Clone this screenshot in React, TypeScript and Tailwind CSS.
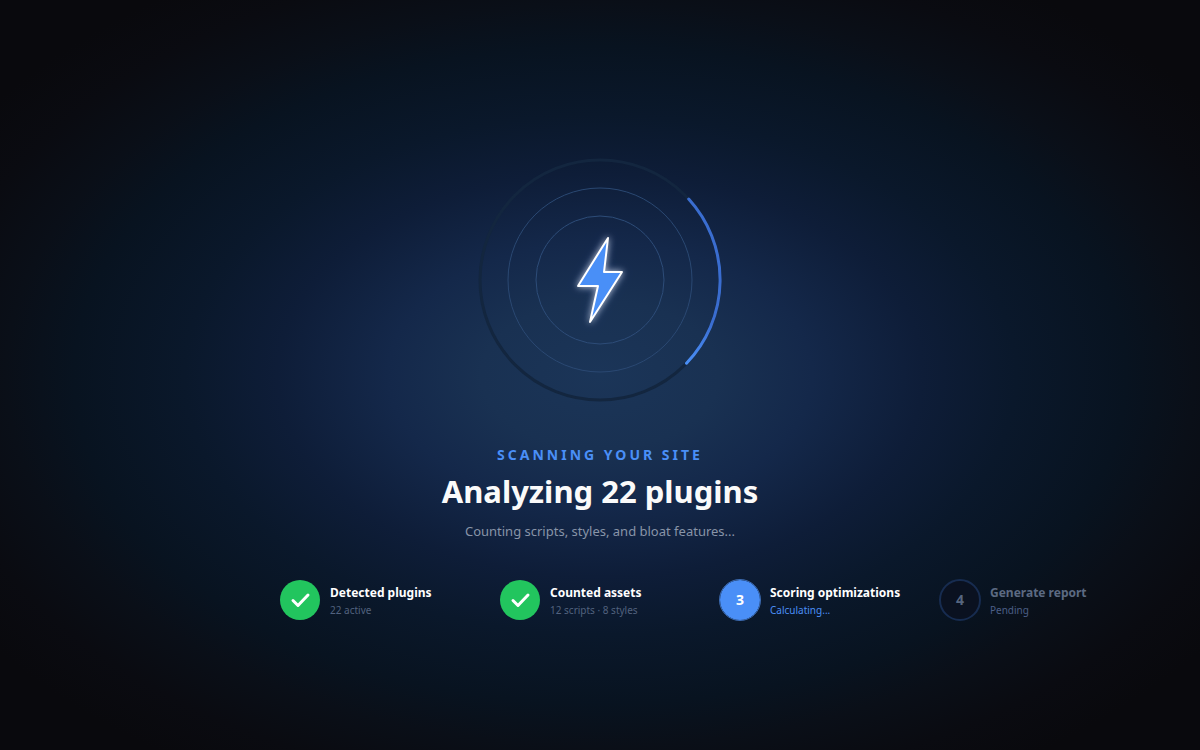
type StepStatus = 'done' | 'active' | 'pending';

interface Step {
  title: string;
  detail: string;
  status: StepStatus;
}

const STEPS: Step[] = [
  { title: 'Detected plugins', detail: '22 active', status: 'done' },
  { title: 'Counted assets', detail: '12 scripts · 8 styles', status: 'done' },
  { title: 'Scoring optimizations', detail: 'Calculating...', status: 'active' },
  { title: 'Generate report', detail: 'Pending', status: 'pending' },
];

const badgeStyles: Record<StepStatus, string> = {
  done: 'bg-[#22c55e] text-white',
  active: 'bg-[#4a8ff7] text-white outline-1 outline-[#3d6db5]',
  pending: 'bg-[#0a1120] text-[#56657f] outline-2 -outline-offset-1 outline-[#172c50]',
};

const titleStyles: Record<StepStatus, string> = {
  done: 'text-white',
  active: 'text-white',
  pending: 'text-[#5c6a82]',
};

const detailStyles: Record<StepStatus, string> = {
  done: 'text-[#52627e]',
  active: 'text-[#4a8ff7]',
  pending: 'text-[#4c5f86]',
};

function ScanRings() {
  return (
    <svg width="280" height="280" viewBox="-140 -140 280 280" fill="none" aria-hidden="true">
      <defs>
        <filter id="bolt-glow" x="-60%" y="-30%" width="220%" height="160%">
          <feDropShadow dx="0" dy="0" stdDeviation="3" floodColor="#ffffff" floodOpacity="0.6" />
          <feDropShadow dx="0" dy="0" stdDeviation="4" floodColor="#4a8ff7" floodOpacity="0.3" />
        </filter>
        <linearGradient id="arc" gradientUnits="userSpaceOnUse" x1="0" y1="-83" x2="0" y2="84">
          <stop offset="0" stopColor="#3a6dd0" />
          <stop offset="0.75" stopColor="#3a6dd0" />
          <stop offset="1" stopColor="#4a8ff7" />
        </linearGradient>
      </defs>
      <circle r="120" stroke="#13263f" strokeWidth="3" />
      <circle r="92" stroke="#2a4872" />
      <circle r="64" stroke="#2d4c78" />
      <path d="M88.7 -81A120 120 0 0 1 86.5 83.2" stroke="url(#arc)" strokeWidth="3" strokeLinecap="round" />
      <path
        d="M8 -42L-22 6H-2L-10 42L22 -8H4Z"
        fill="#4a8ff7"
        stroke="#ffffff"
        strokeWidth="2"
        strokeLinejoin="round"
        filter="url(#bolt-glow)"
      />
    </svg>
  );
}

function CheckMark() {
  return (
    <svg className="size-10" viewBox="0 0 40 40" fill="none" aria-hidden="true">
      <path d="M13 20.5L18 25.5L28 15" stroke="#ffffff" strokeWidth="3" strokeLinecap="round" strokeLinejoin="round" />
    </svg>
  );
}

function StepItem({ step, index }: { step: Step; index: number }) {
  return (
    <li className="flex w-[220px] shrink-0 items-center gap-[10px]">
      <div
        className={`flex size-10 shrink-0 items-center justify-center rounded-full text-sm font-bold ${badgeStyles[step.status]}`}
      >
        {step.status === 'done' ? <CheckMark /> : index + 1}
      </div>
      <div className="whitespace-nowrap">
        <div className={`text-[12px] leading-5 font-bold ${titleStyles[step.status]}`}>{step.title}</div>
        <div className={`text-[10px] leading-[14px] ${detailStyles[step.status]}`}>{step.detail}</div>
      </div>
    </li>
  );
}

export default function App() {
  return (
    <main className="flex min-h-screen flex-col items-center overflow-hidden bg-[radial-gradient(ellipse_at_center,#1b3558_0%,#193152_14%,#14284a_25%,#0e1d38_38%,#0a182b_49%,#081320_62%,#0a0f18_70%,#0a0b11_79%,#09090d_88%)] pt-[140px] font-['Noto_Sans','Open_Sans',sans-serif]">
      <ScanRings />
      <p className="mt-[25px] text-sm leading-5 font-bold tracking-[3px] text-[#4a8ff7]">SCANNING YOUR SITE</p>
      <h1 className="mt-1.5 text-[31px] leading-10 font-bold text-[#fafafa]">Analyzing 22 plugins</h1>
      <p className="mt-2.5 text-[13px] leading-5 text-[#8894a8]">Counting scripts, styles, and bloat features...</p>
      <ol className="mt-[39px] flex w-[640px]">
        {STEPS.map((step, i) => (
          <StepItem key={step.title} step={step} index={i} />
        ))}
      </ol>
    </main>
  );
}
